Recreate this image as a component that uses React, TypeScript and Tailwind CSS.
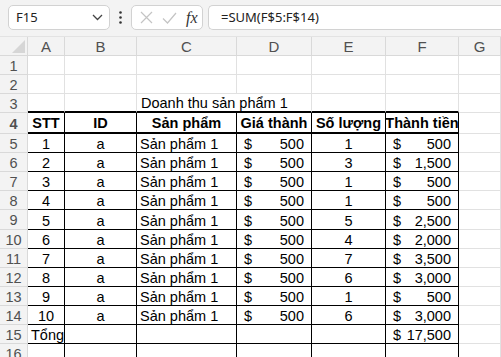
const QTY = [1, 3, 1, 1, 5, 4, 7, 6, 1, 6];
const COLS = ["A", "B", "C", "D", "E", "F", "G"];

const fmt = (n: number) => n.toLocaleString("en-US");

const GRID = "grid grid-cols-[28px_37px_72px_100px_75px_74px_73px_1fr]";
const GRAY = "border-r border-b border-[#e1e1e1]";
const BLACK = "border-r border-b border-black";
const HDR = "border-r border-b border-[#d9d9d9] bg-[#f3f3f3] text-[#505050] flex items-center justify-center leading-none";

function RowNum({ n }: { n: number }) {
  return <div className={`${HDR} text-[14.5px] pt-[2px]`}>{n}</div>;
}

function Money({ v }: { v: number }) {
  return (
    <div className={`${BLACK} flex items-center justify-between pl-[7px] pr-[7px] pt-[2px]`}>
      <span>$</span>
      <span>{fmt(v)}</span>
    </div>
  );
}

export default function App() {
  return (
    <div className="w-[501px] h-[357px] overflow-hidden bg-white font-['Liberation_Sans',Arial,sans-serif] text-[14.5px] leading-[16px] text-black">
      {/* formula bar */}
      <div className="h-[37px] bg-[#f3f3f3] flex items-start pt-[5px] border-b border-[#e3e3e3] leading-normal">
        <div className="ml-[8px] w-[102px] h-[25px] bg-white border border-[#d2d2d2] rounded-[5px] flex items-center justify-between pl-[7px] pr-[6px] font-['Noto_Sans',sans-serif] text-[13px] text-[#222]">
          <span>F15</span>
          <svg width="11" height="7" viewBox="0 0 11 7" fill="none" stroke="#444" strokeWidth="1.3">
            <path d="M1 1l4.5 4.5L10 1" />
          </svg>
        </div>
        <div className="w-[21px] h-[25px] flex items-center justify-center">
          <svg width="3" height="13" viewBox="0 0 3 13" fill="#333">
            <circle cx="1.5" cy="1.5" r="1.3" />
            <circle cx="1.5" cy="6.5" r="1.3" />
            <circle cx="1.5" cy="11.5" r="1.3" />
          </svg>
        </div>
        <div className="w-[72px] h-[25px] bg-white border border-[#d2d2d2] rounded-[5px] flex items-center pl-[8px] gap-[9px]">
          <svg width="13" height="13" viewBox="0 0 13 13" fill="none" stroke="#c4c4c4" strokeWidth="1.2">
            <path d="M1 1l11 11M12 1L1 12" />
          </svg>
          <svg width="15" height="12" viewBox="0 0 15 12" fill="none" stroke="#c4c4c4" strokeWidth="1.2">
            <path d="M1 6.5l4.5 4.5L14 1" />
          </svg>
          <span className="font-['Liberation_Serif',serif] italic text-[16px] text-[#333] leading-none">fx</span>
        </div>
        <div className="ml-[5px] flex-1 h-[25px] bg-white border border-r-0 border-[#d2d2d2] rounded-l-[5px] flex items-center pl-[12px] font-['Noto_Sans',sans-serif] text-[13px] text-[#222]">
          =SUM(F$5:F$14)
        </div>
      </div>

      {/* column headers */}
      <div className={`${GRID} h-[19px]`}>
        <div className={`${HDR} relative`}>
          <svg className="absolute right-[2px] bottom-[2px]" width="13" height="13" viewBox="0 0 13 13">
            <path d="M13 0V13H0Z" fill="#d6d6d6" />
          </svg>
        </div>
        {COLS.map((c) => (
          <div key={c} className={`${HDR} text-[15px] pt-[1px]`}>
            {c}
          </div>
        ))}
      </div>

      {/* rows 1-2 */}
      {[1, 2].map((n) => (
        <div key={n} className={`${GRID} h-[19px]`}>
          <RowNum n={n} />
          {COLS.map((c) => (
            <div key={c} className={GRAY} />
          ))}
        </div>
      ))}

      {/* row 3: title */}
      <div className={`${GRID} h-[19px]`}>
        <RowNum n={3} />
        <div className="border-r border-[#e1e1e1] border-b-2 border-b-black" />
        <div className="border-r border-[#e1e1e1] border-b-2 border-b-black" />
        <div className="border-b-2 border-black flex items-center pl-[4px] pt-[1px] whitespace-nowrap overflow-visible relative z-10">
          Doanh thu sản phẩm 1
        </div>
        <div className="border-r border-[#e1e1e1] border-b-2 border-b-black" />
        <div className="border-r border-[#e1e1e1] border-b-2 border-b-black" />
        <div className="border-r border-[#e1e1e1] border-b-2 border-b-black" />
        <div className={GRAY} />
      </div>

      {/* row 4: headers */}
      <div className={`${GRID} h-[21px] font-bold`}>
        <RowNum n={4} />
        {["STT", "ID", "Sản phẩm", "Giá thành", "Số lượng", "Thành tiền"].map((h) => (
          <div key={h} className="border-r border-black border-b-2 flex items-center justify-center whitespace-nowrap pt-[1px]">
            {h}
          </div>
        ))}
        <div className={GRAY} />
      </div>

      {/* data rows */}
      {QTY.map((q, i) => (
        <div key={i} className={`${GRID} ${i === 4 ? "h-[20px]" : "h-[19px]"}`}>
          <RowNum n={i + 5} />
          <div className={`${BLACK} flex items-center justify-center pt-[2px]`}>{i + 1}</div>
          <div className={`${BLACK} flex items-center justify-center pt-[2px]`}>a</div>
          <div className={`${BLACK} flex items-center pl-[3px] pt-[2px] whitespace-nowrap`}>Sản phẩm 1</div>
          <Money v={500} />
          <div className={`${BLACK} flex items-center justify-center pt-[2px]`}>{q}</div>
          <Money v={q * 500} />
          <div className={GRAY} />
        </div>
      ))}

      {/* row 15: total */}
      <div className={`${GRID} h-[19px]`}>
        <RowNum n={15} />
        <div className={`${BLACK} flex items-center pl-[3px] pt-[2px] whitespace-nowrap`}>Tổng</div>
        <div className={BLACK} />
        <div className={BLACK} />
        <div className={BLACK} />
        <div className={BLACK} />
        <Money v={17500} />
        <div className={GRAY} />
      </div>

      {/* row 16 */}
      <div className={`${GRID} h-[19px]`}>
        <RowNum n={16} />
        {["A", "B", "C", "D", "E", "F"].map((c) => (
          <div key={c} className={BLACK} />
        ))}
        <div className={GRAY} />
      </div>
    </div>
  );
}
